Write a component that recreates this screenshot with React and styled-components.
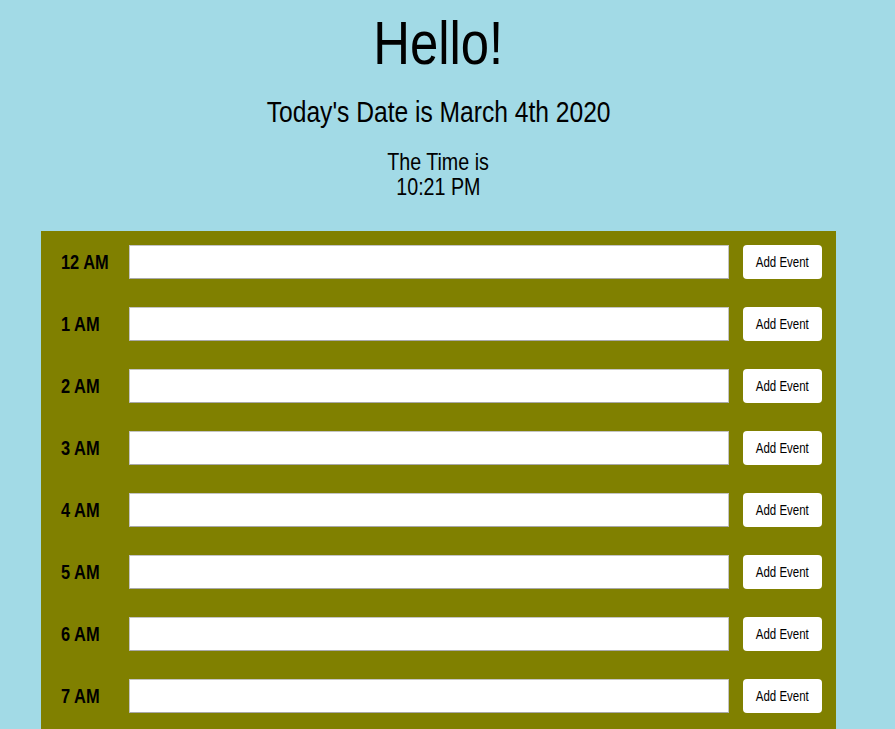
import React from "react";
import styled, { createGlobalStyle } from "styled-components";

const Global = createGlobalStyle`
  html, body { margin: 0; padding: 0; }
  body {
    background: #a2dae6;
    font-family: "Liberation Sans", Arial, sans-serif;
    color: #000;
  }
`;

/* Liberation Sans squeezed to the widths of a narrow sans */
const Narrow = styled.span`
  display: inline-block;
  white-space: nowrap;
  transform: scaleX(0.82);
  transform-origin: ${(p) => (p.$origin === "left" ? "left center" : "center center")};
`;

const Page = styled.div`
  padding-top: 12px;
`;

const Header = styled.header`
  text-align: center;
  width: 877px;
`;

const Title = styled.h1`
  margin: 0;
  font-size: 62px;
  line-height: 1;
  font-weight: normal;
`;

const DateLine = styled.h2`
  margin: 20px 0 0;
  font-size: 30px;
  line-height: 36px;
  font-weight: normal;
`;

const TimeLine = styled.p`
  margin: 19px 0 0;
  font-size: 24px;
  line-height: 25px;
`;

const Planner = styled.section`
  margin: 32px 0 0 41px;
  width: 795px;
  background: #808000;
  padding-bottom: 14px;
`;

const Row = styled.div`
  display: flex;
  align-items: center;
  height: 62px;
  padding-right: 14px;
  box-sizing: border-box;
`;

const Hour = styled.div`
  width: 88px;
  flex: none;
  box-sizing: border-box;
  padding-left: 20px;
  font-size: 20px;
  font-weight: bold;
`;

const EventInput = styled.input`
  width: 600px;
  height: 34px;
  flex: none;
  box-sizing: border-box;
  border: 1px solid #c4c4c4;
  border-bottom-color: #a9a9a9;
  background: #fff;
  margin: 0;
  padding: 0 6px;
  font-family: inherit;
`;

const AddButton = styled.button`
  margin-left: 14px;
  width: 79px;
  height: 34px;
  flex: none;
  border: none;
  border-radius: 4px;
  background: #fff;
  font-family: "Liberation Sans", Arial, sans-serif;
  font-size: 14px;
  color: #000;
  padding: 0;
`;

const hours = ["12 AM", "1 AM", "2 AM", "3 AM", "4 AM", "5 AM", "6 AM", "7 AM"];

export default function App() {
  return (
    <Page>
      <Global />
      <Header>
        <Title>
          <Narrow>Hello!</Narrow>
        </Title>
        <DateLine>
          <Narrow>Today's Date is March 4th 2020</Narrow>
        </DateLine>
        <TimeLine>
          <Narrow>The Time is</Narrow>
          <br />
          <Narrow>10:21 PM</Narrow>
        </TimeLine>
      </Header>
      <Planner>
        {hours.map((h) => (
          <Row key={h}>
            <Hour>
              <Narrow $origin="left">{h}</Narrow>
            </Hour>
            <EventInput type="text" />
            <AddButton>
              <Narrow>Add Event</Narrow>
            </AddButton>
          </Row>
        ))}
      </Planner>
    </Page>
  );
}
